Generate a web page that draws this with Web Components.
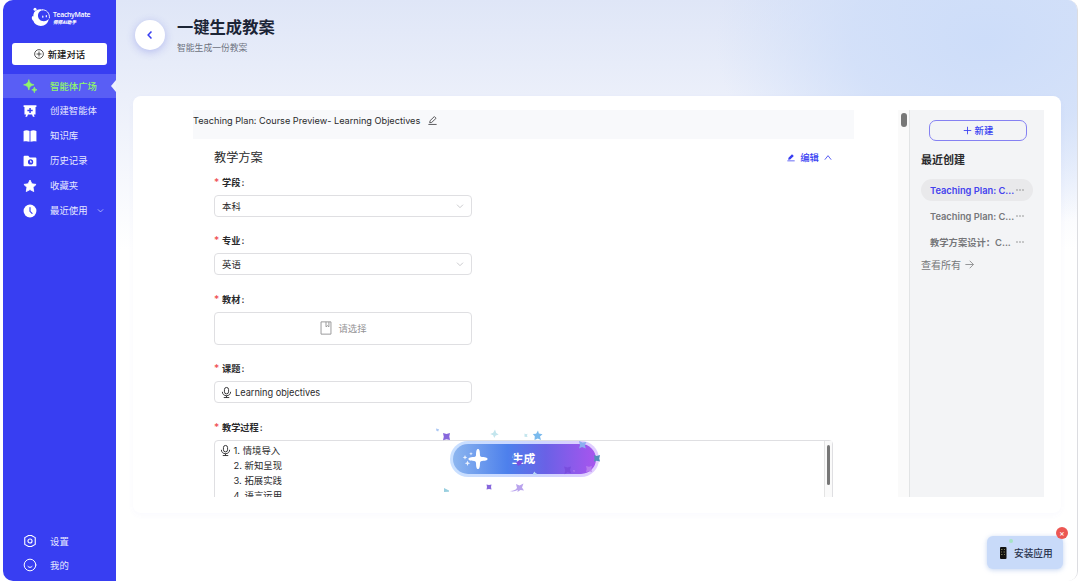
<!DOCTYPE html>
<html lang="zh-CN">
<head>
<meta charset="utf-8">
<title>TeachyMate</title>
<style>
html, body {
  margin: 0;
  height: 100%;
  overflow: hidden;
  background: #fff;
}

body {
  font-family: Inter, "Noto Sans CJK SC", sans-serif;
  font-size: 9.4px;
  color: #2a2a2c;
}
</style>
</head>
<body>
<tm-app></tm-app>

<script>
const ICONS = {
  plusCircle: '<g fill="none" stroke="currentColor" stroke-width="1.7"><circle cx="12" cy="12" r="10.500"/><path d="M12 6v12M6 12h12"/></g>',
  sparkle: '<path fill="currentColor" d="M10 1c1.200 5.800 2.700 7.500 9 9-6.300 1.500-7.800 3.200-9 9-1.200-5.800-2.700-7.500-9-9C7.300 8.500 8.800 6.800 10 1zM19.500 13.500c.7 3.200 1.600 4.100 4.500 5-2.900.9-3.800 1.800-4.500 5-.7-3.200-1.600-4.100-4.500-5 2.900-.9 3.800-1.800 4.500-5z" stroke="currentColor" stroke-width="1.200"/>',
  board: '<path fill="currentColor" fill-rule="evenodd" d="M1 2h22v3h-1.500v13h-3l1.500 4h-3l-1.500-4h-7L7 22H4l1.500-4h-3V5H1zM10.800 7v3H7.500v2.600h3.300v3h2.600v-3h3.200V10h-3.200V7z"/>',
  book: '<path fill="currentColor" d="M1 3.500C4.500 1.800 8 2 11.200 3.500V22C8 20.500 4.500 20.500 1 21.500zM12.800 3.500C16 2 19.500 1.800 23 3.500v18c-3.500-1-7-1-10.200.5z"/>',
  folder: '<path fill="currentColor" fill-rule="evenodd" d="M1 4.500C1 3.500 1.700 3 2.500 3H9l2.500 3h10c1 0 1.500.6 1.500 1.500v12c0 1-.6 1.500-1.500 1.500h-19C1.600 21 1 20.400 1 19.500zM13 9a4.500 4.500 0 1 0 0 9 4.500 4.500 0 0 0 0-9zm-.8 2.300h1.600V13h1.700v1.600h-3.300z"/>',
  star: '<path fill="currentColor" stroke="currentColor" stroke-width="1.500" stroke-linejoin="round" d="M12 1.800l3.200 6.500 7.200 1-5.200 5 1.200 7.200-6.400-3.400-6.400 3.400 1.200-7.200-5.200-5 7.200-1z"/>',
  clock: '<circle cx="12" cy="12" r="11" fill="currentColor"/><path d="M12 6v6.500l3.500 3.500" fill="none" stroke="#383ef2" stroke-width="2" stroke-linecap="round"/>',
  gear: '<g fill="none" stroke="currentColor" stroke-width="1.900" stroke-linejoin="round"><path d="M9.500 2.500h5L21 6.200v11.600l-6.500 3.700h-5L3 17.800V6.200z"/><circle cx="12" cy="12" r="3.500"/></g>',
  smile: '<g fill="none" stroke="currentColor" stroke-width="1.700" stroke-linecap="round"><circle cx="12" cy="12" r="10"/><path d="M8.500 14.500c2 2.200 5 2.200 7 0"/></g>',
  down: '<path d="M3 8l9 9 9-9" fill="none" stroke="currentColor" stroke-width="2.200"/>',
  up: '<path d="M2.500 18.500L12 6.500l9.500 12" fill="none" stroke="currentColor" stroke-width="2.500"/>',
  left: '<path d="M15.500 3.500L7.500 12l8 8.500" fill="none" stroke="currentColor" stroke-width="3.600"/>',
  right: '<path d="M1 12h21M12.500 2l10 10-10 10" fill="none" stroke="currentColor" stroke-width="2"/>',
  pen: '<g fill="none" stroke="currentColor" stroke-width="2"><path d="M4.500 18l1-5.500L17 1.500l4.500 4.500L10 17zM1 22.500h22"/></g>',
  penSolid: '<path fill="currentColor" d="M3.500 18.500l1-6L15 2l5.500 5.500L9.500 18zM1 20.800h22V23H1z"/>',
  plus: '<path d="M12 2v20M2 12h20" fill="none" stroke="currentColor" stroke-width="2.300"/>',
  mic: '<g fill="none" stroke="currentColor" stroke-width="2"><rect x="7.500" y="1" width="9" height="14" rx="4.500"/><path d="M3 10.500c0 5 3.500 8.500 9 8.500s9-3.500 9-8.500M12 19v4M6 23h12"/></g>',
  bookmark: '<g fill="none" stroke="currentColor" stroke-width="1.600"><path d="M3.500 1.500h17v21h-17zM12 1.500V10l2.500-2 2.500 2V1.500"/></g>',
  dots: '<g fill="currentColor"><circle cx="3" cy="12" r="2"/><circle cx="12" cy="12" r="2"/><circle cx="21" cy="12" r="2"/></g>'
};

class TmIcon extends HTMLElement {
  constructor() {
    super();
    this.attachShadow({mode: 'open'});
  }

  connectedCallback() {
    this.shadowRoot.innerHTML = `
<style>
:host { display: block; flex: none; width: 14px; height: 14px; }
svg { display: block; width: 100%; height: 100%; }
</style>
<svg viewBox="0 0 24 24">${ICONS[this.getAttribute('name')]}</svg>
`;
  }
}

class TmLogo extends HTMLElement {
  constructor() {
    super();
    this.attachShadow({mode: 'open'}).innerHTML = `
<style>
:host { display: flex; gap: 2px; height: 20px; color: #fff; }
svg { width: 20px; height: 20px; }
.words { display: flex; flex-direction: column; padding-top: 4px; }
b { font: 600 6.900px/8px "Open Sans", sans-serif; letter-spacing: -.32px; }
i { font: italic 900 4.600px/6px "Noto Sans CJK SC", sans-serif; }
</style>
<svg viewBox="0 0 20 20">
  <circle cx="4" cy="2.300" r="1.500" fill="#fff"/>
  <path fill="#fff" d="M3.200 5.200C5.500 2.300 9.200 1.600 12.500 3c-3 .2-5.200 2-5.500 4.800-.4 3.600 2.200 6.500 5.800 6.500 2.300 0 4-.9 5-2.500-.6 4.200-3.800 7.200-8 7.200-3.600 0-6.500-2-7.500-5.200C.9 12.700.5 10.700 1 9.700c.3-.6.9-.5 1.300-.1 0-1.600.2-3 .9-4.400z"/>
  <path fill="none" stroke="#fff" stroke-width=".9" d="M11 2.800c4.500-.2 7.900 3.300 7.400 8.500"/>
  <path stroke="#fff" stroke-width="1.200" stroke-linecap="round" d="M11.800 9v1.200M15.300 8.500v1.200"/>
</svg>
<div class="words"><b>TeachyMate</b><i>师师AI助手</i></div>
`;
  }
}

class TmNavItem extends HTMLElement {
  constructor() {
    super();
    this.attachShadow({mode: 'open'});
  }

  connectedCallback() {
    this.shadowRoot.innerHTML = `
<style>
:host {
  display: flex;
  align-items: center;
  box-sizing: border-box;
  height: 25px;
  padding-left: 20px;
  color: #e6e8ff;
}
:host([active]) {
  position: relative;
  height: 24px;
  background: #595ef5;
  color: #8ff66c;
  font-weight: 500;
}
:host([active])::after {
  content: "";
  position: absolute;
  right: 0;
  top: 6px;
  border: solid transparent;
  border-width: 6px 5.500px 6px 0;
  border-right-color: #eef1fc;
}
.label { margin: -1px 0 0 13px; white-space: nowrap; }
.icon { color: #fff; }
:host([active]) .icon { color: inherit; }
.arrow { width: 7px; height: 7px; margin: -1px 0 0 9px; }
</style>
<tm-icon class="icon" name="${this.getAttribute('icon')}"></tm-icon>
<span class="label"><slot></slot></span>
${this.hasAttribute('expandable') ? '<tm-icon class="arrow" name="down"></tm-icon>' : ''}
`;
  }
}

class TmSidebar extends HTMLElement {
  constructor() {
    super();
    this.attachShadow({mode: 'open'}).innerHTML = `
<style>
:host {
  display: flex;
  flex-direction: column;
  box-sizing: border-box;
  width: 113px;
  background: #383ef2;
}
tm-logo { margin: 7px 0 16px 28px; }
button {
  display: flex;
  align-items: center;
  justify-content: center;
  gap: 4px;
  box-sizing: border-box;
  height: 22px;
  margin: 0 9px 9px;
  padding: 0 0 1px;
  border: 0;
  border-radius: 3px;
  background: #fff;
  color: #111;
  font: inherit;
  font-weight: 500;
}
button tm-icon { width: 10px; height: 10px; }
.bottom { margin-top: auto; padding-bottom: 4px; }
.bottom tm-nav-item { height: 24px; }
</style>
<tm-logo></tm-logo>
<button><tm-icon name="plusCircle"></tm-icon>新建对话</button>
<nav>
  <tm-nav-item icon="sparkle" active>智能体广场</tm-nav-item>
  <tm-nav-item icon="board">创建智能体</tm-nav-item>
  <tm-nav-item icon="book">知识库</tm-nav-item>
  <tm-nav-item icon="folder">历史记录</tm-nav-item>
  <tm-nav-item icon="star">收藏夹</tm-nav-item>
  <tm-nav-item icon="clock" expandable>最近使用</tm-nav-item>
</nav>
<div class="bottom">
  <tm-nav-item icon="gear">设置</tm-nav-item>
  <tm-nav-item icon="smile">我的</tm-nav-item>
</div>
`;
  }
}

class TmPageHeader extends HTMLElement {
  constructor() {
    super();
    this.attachShadow({mode: 'open'}).innerHTML = `
<style>
:host { display: flex; align-items: flex-start; gap: 12px; height: 96px; padding-left: 19px; box-sizing: border-box; }
.back {
  display: grid;
  place-items: center;
  width: 30px;
  height: 30px;
  margin-top: 20px;
  border-radius: 50%;
  background: #fff;
  color: #383ef2;
  box-shadow: 0 2px 8px rgba(70, 80, 220, .3);
}
.back tm-icon { width: 10px; height: 10px; }
h1 { margin: 16px 0 0; font-size: 16.300px; line-height: 22px; font-weight: 600; color: #1c2536; }
p { margin: 3px 0 0; font-size: 8.800px; line-height: 13px; color: #6d7280; }
</style>
<div class="back"><tm-icon name="left"></tm-icon></div>
<div>
  <h1><slot></slot></h1>
  <p><slot name="subtitle"></slot></p>
</div>
`;
  }
}

class TmField extends HTMLElement {
  constructor() {
    super();
    this.attachShadow({mode: 'open'});
  }

  connectedCallback() {
    this.shadowRoot.innerHTML = `
<style>
:host { display: block; width: 258px; margin-bottom: 16.400px; }
label { display: block; height: 16px; margin-bottom: 4px; line-height: 16px; font-size: 9.200px; font-weight: 600; white-space: nowrap; }
label::before { content: "*"; display: inline-block; width: 8px; color: #ef4c50; font-size: 10px; line-height: 12px; font-weight: 500; }
label span { margin-left: 1px; }
.box {
  display: flex;
  align-items: center;
  box-sizing: border-box;
  height: 22px;
  padding: 0 7px;
  border: 1px solid #dfdfe2;
  border-radius: 4px;
  background: #fff;
}
:host([type="picker"]) .box { height: 33px; justify-content: center; gap: 5px; padding-bottom: 1px; color: #949496; }
:host([type="area"]) { width: 619px; margin: 0; }
:host([type="area"]) .box { height: 90px; align-items: flex-start; padding: 2px 0 0 6px; line-height: 15px; }
:host([type="text"]) .box { font-size: 9.200px; }
.arrow { width: 8px; height: 8px; margin-left: auto; color: #b8b8bc; }
.mic { width: 11px; height: 13px; margin: 0 3px 0 -1px; }
:host([type="area"]) .mic { margin: 1px 2.500px 0 -1px; }
.track { align-self: stretch; box-sizing: border-box; width: 8px; margin: -2px 0 0 auto; padding: 4px 0 0 2px; border-left: 1px solid #e4e4e4; background: #fafafa; }
.track::before { content: ""; display: block; width: 3px; height: 40px; border-radius: 2px; background: #777; }
</style>
<label>${this.getAttribute('label')}<span>:</span></label>
<div class="box">${this.inner()}</div>
`;
  }

  inner() {
    switch (this.getAttribute('type')) {
      case 'select':
        return '<slot></slot><tm-icon class="arrow" name="down"></tm-icon>';
      case 'picker':
        return '<tm-icon name="bookmark"></tm-icon><slot></slot>';
      case 'area':
        return '<tm-icon class="mic" name="mic"></tm-icon><slot></slot><div class="track"></div>';
      default:
        return '<tm-icon class="mic" name="mic"></tm-icon><slot></slot>';
    }
  }
}

class TmPlanForm extends HTMLElement {
  constructor() {
    super();
    this.attachShadow({mode: 'open'}).innerHTML = `
<style>
:host { display: block; width: 661px; height: 387px; overflow: hidden; }
header { display: flex; align-items: center; gap: 8px; height: 29px; padding-bottom: 8px; box-sizing: border-box; background: #f8f9fb; font-size: 9.170px; }
header tm-icon { width: 9px; height: 9px; }
.body { padding: 0 21px; }
.title { display: flex; align-items: center; height: 36px; }
h2 { margin: 0 auto 0 0; font-size: 12.200px; font-weight: 400; }
.edit { display: flex; align-items: center; gap: 5px; margin-right: 1px; color: #383ef2; font-weight: 500; }
.edit tm-icon { width: 8px; height: 9px; }
ol { margin: 0; padding: 0; list-style: none; }
</style>
<header>Teaching Plan: Course Preview- Learning Objectives <tm-icon name="pen"></tm-icon></header>
<div class="body">
  <div class="title">
    <h2>教学方案</h2>
    <div class="edit"><tm-icon name="penSolid"></tm-icon>编辑<tm-icon name="up"></tm-icon></div>
  </div>
  <tm-field type="select" label="学段">本科</tm-field>
  <tm-field type="select" label="专业">英语</tm-field>
  <tm-field type="picker" label="教材">请选择</tm-field>
  <tm-field type="text" label="课题">Learning objectives</tm-field>
  <tm-field type="area" label="教学过程">
    <ol>
      <li>1. 情境导入</li>
      <li>2. 新知呈现</li>
      <li>3. 拓展实践</li>
      <li>4. 语言运用</li>
    </ol>
  </tm-field>
</div>
`;
  }
}

class TmGenerateButton extends HTMLElement {
  constructor() {
    super();
    this.attachShadow({mode: 'open'}).innerHTML = `
<style>
:host { display: block; width: 149px; height: 36px; }
button {
  position: relative;
  box-sizing: border-box;
  width: 100%;
  height: 100%;
  padding: 0;
  border: 0;
  border-radius: 18px;
  background: linear-gradient(90deg, #c9e0ff, #ccd6ff 55%, #e2cdff);
  font: 700 11.800px/37px Inter, "Noto Sans CJK SC", sans-serif;
  color: #fff;
}
button::before {
  content: "";
  position: absolute;
  inset: 3px;
  border-radius: 15px;
  background: linear-gradient(90deg, #8db6ef, #4d80ec 38%, #6a61e6 65%, #a855ee);
}
span { position: relative; left: -1px; }
svg { position: absolute; left: -15px; top: -14px; width: 170px; height: 66px; overflow: visible; }
</style>
<button>
  <span><slot></slot></span>
  <svg viewBox="435 427 170 66">
    <g fill="#fff">
      <path d="M478 449c1.200 0 1.900 1.200 2 6.300.2 1 .8 1.600 1.800 1.800 5 .2 5.700.9 5.700 1.900s-.7 1.700-5.700 1.900c-1 .2-1.600.8-1.800 1.800-.1 5.100-.8 6.300-2 6.300s-1.900-1.200-2-6.300c-.2-1-.8-1.600-1.800-1.800-5-.2-5.700-.9-5.700-1.900s.7-1.700 5.700-1.900c1-.2 1.600-.8 1.800-1.800.1-5.100.8-6.300 2-6.300z"/>
      <path opacity=".85" d="M465 455l.7 1.700 1.700.7-1.700.7-.7 1.700-.7-1.700-1.700-.7 1.700-.7zM471 452l.5 1.300 1.300.5-1.300.5-.5 1.300-.5-1.300-1.300-.5 1.300-.5zM467.500 460.500l.8 2 2 .8-2 .8-.8 2-.8-2-2-.8 2-.8z"/>
    </g>
    <path fill="#8767dc" d="M443 433l3.500 1 3.500-1-.7 3.500.7 3.500-3.500-.8-3.500 1 .8-3.500zM486.500 484.500l2.500.6 2.500-.6-.5 2.500.5 2.500-2.500-.5-2.500.5.500-2.500z"/>
    <path fill="#b9a3ed" d="M516 484l3.500 1.500 4-2-1.500 4 2 3-3.500-.5-3 2 .2-2.200c-2.500 1.700-5 2-8.200 1.200 3 .2 5.500-.5 7.500-3z"/>
    <path fill="#acc8f4" d="M436 428.500l3 .8-.8 2.200-1.800-.8z"/>
    <path fill="#c3e5ed" d="M495 429.500l1.200 3.500 2.500 1.500-3 1-1.500 2.500-1-2.700-3-1.300 3-1.200zM524.500 433.500l1.500.7 1.500-.5-.5 1.800.5 1.500-3-.3z"/>
    <path fill="#7abaed" d="M538 430.500l.8 3 3.700.7-2.500 2.300 1 3.500-3.200-1.400-3.300 1.300.3-3.600-2-2.300 3.300-.3z"/>
    <path fill="#99cfdf" d="M444 488l5 2.500v1.200l-5 .3z"/>
    <path fill="#8caef0" d="M579 441l3.500 1.500 4-.5-1.700 3 1 3.500-3.800-1.500-3 1.500 1-3.300z"/>
    <path fill="#548eba" d="M594 455l2.500 1 3.500-1-.7 3.500.7 3-3.500-.7-2.500 1 .5-3z"/>
    <path fill="#794ddd" d="M564 466.500l3.500 1 3.500-1-1 3.300 1 3.500-3.500-1-3 2 .7-4zM516 462l3.500-1.500 3 1-1.500 3-3 1.500z"/>
    <path fill="#bb84ee" opacity=".8" d="M586 466l3 .7 3-.7-.7 3 .7 3-3-.7-3 .7.700-3zM573 470l2 .5-1 2z"/>
    <path fill="#b9d7f8" d="M534.500 471.500l1 1.500 1.500.8-1.500 1.200h-2l-.5-1.500z"/>
    <path fill="#5a8ee8" d="M512.500 454.500l2.200 1-.5 2.500-1.900.4z"/>
  </svg>
</button>
`;
  }
}

class TmHistoryItem extends HTMLElement {
  constructor() {
    super();
    this.attachShadow({mode: 'open'}).innerHTML = `
<style>
:host {
  display: flex;
  align-items: center;
  justify-content: space-between;
  box-sizing: border-box;
  height: 22px;
  margin-bottom: 4px;
  padding: 0 9px;
  border-radius: 11px;
  color: #76777a;
  font-size: 9.300px;
  font-weight: 600;
  white-space: nowrap;
}
:host([active]) { background: #e9e9eb; color: #4442ee; }
tm-icon { width: 8px; height: 8px; color: #777; }
</style>
<span><slot></slot></span><tm-icon name="dots"></tm-icon>
`;
  }
}

class TmHistory extends HTMLElement {
  constructor() {
    super();
    this.attachShadow({mode: 'open'}).innerHTML = `
<style>
:host { display: block; box-sizing: border-box; width: 135px; height: 387px; padding: 10px 11px 0; border-left: 1px solid #e2e4e5; background: #f3f4f6; }
button {
  display: flex;
  align-items: center;
  justify-content: center;
  gap: 3px;
  box-sizing: border-box;
  width: 98px;
  height: 21px;
  margin: 0 0 0 8px;
  padding: 0 0 1px;
  border: 1px solid #8581f2;
  border-radius: 7px;
  background: transparent;
  color: #383ef2;
  font: inherit;
  font-weight: 500;
}
button tm-icon { width: 9px; height: 9px; }
h3 { margin: 11px 0; font-size: 11px; line-height: 16px; font-weight: 600; }
.all { display: flex; align-items: center; gap: 3px; height: 20px; margin-top: -3px; font-size: 10px; color: #77787a; }
.all tm-icon { width: 9px; height: 9px; margin-left: 1px; }
</style>
<button><tm-icon name="plus"></tm-icon>新建</button>
<h3>最近创建</h3>
<tm-history-item active>Teaching Plan: C...</tm-history-item>
<tm-history-item>Teaching Plan: C...</tm-history-item>
<tm-history-item>教学方案设计：C...</tm-history-item>
<div class="all">查看所有<tm-icon name="right"></tm-icon></div>
`;
  }
}

class TmInstallButton extends HTMLElement {
  constructor() {
    super();
    this.attachShadow({mode: 'open'}).innerHTML = `
<style>
:host {
  display: flex;
  align-items: center;
  gap: 7px;
  box-sizing: border-box;
  width: 76px;
  height: 33px;
  padding-left: 12px;
  border-radius: 6px;
  background: #c8daf9;
  box-shadow: 0 1px 5px rgba(110, 150, 220, .4);
  color: #29344e;
  font-size: 9.700px;
  font-weight: 500;
  white-space: nowrap;
}
svg { width: 8px; height: 12px; }
.close {
  position: absolute;
  right: -5px;
  top: -9px;
  width: 12px;
  height: 12px;
  border-radius: 50%;
  background: #ec5753;
  color: #fff;
  font-size: 8px;
  line-height: 12px;
  text-align: center;
}
.dot { position: absolute; left: 22px; top: 3px; width: 4px; height: 4px; border-radius: 50%; background: #a5e2c4; }
</style>
<svg viewBox="0 0 8 12"><rect x="1" width="6.500" height="12" rx="1" fill="#111"/><path fill="#775" d="M2 2h1.500v1H2zM5 2h1v1H5zM2 4.500h1v1H2zM4.500 4.500H6v1H4.500zM2 7h1.500v1H2zM5 7h1v1H5z"/></svg>
<slot></slot>
<span class="dot"></span>
<span class="close">×</span>
`;
  }
}

class TmApp extends HTMLElement {
  constructor() {
    super();
    this.attachShadow({mode: 'open'}).innerHTML = `
<style>
:host {
  display: flex;
  position: relative;
  box-sizing: border-box;
  height: 581px;
  margin: 0 2px 0 3px;
  border-right: 1px solid #dcdde1;
  border-radius: 10px;
  overflow: hidden;
}
main {
  flex: 1;
  background:
    radial-gradient(ellipse 270px 190px at 870px 40px, #cdddf9 0, rgba(207, 222, 249, .8) 50%, rgba(220, 230, 250, 0) 100%),
    linear-gradient(#dfe6f7 0, #ebeffa 95px, #fff 250px);
}
.card {
  display: flex;
  position: relative;
  box-sizing: border-box;
  width: 928px;
  height: 417px;
  margin-left: 17px;
  padding: 14px 0 0 60px;
  border-radius: 8px;
  background: #fff;
  box-shadow: 0 2px 6px rgba(100, 110, 220, .04);
}
.track { box-sizing: border-box; width: 11px; height: 387px; margin-left: 44px; padding: 3px 0 0 3px; background: #fafafa; }
.track::before { content: ""; display: block; width: 6px; height: 14px; border-radius: 3px; background: #777; }
tm-generate-button { position: absolute; left: 317px; top: 345px; }
tm-install-button { position: absolute; right: 14px; bottom: 12px; }
</style>
<tm-sidebar></tm-sidebar>
<main>
  <tm-page-header>一键生成教案<span slot="subtitle">智能生成一份教案</span></tm-page-header>
  <div class="card">
    <tm-plan-form></tm-plan-form>
    <div class="track"></div>
    <tm-history></tm-history>
    <tm-generate-button>生成</tm-generate-button>
  </div>
</main>
<tm-install-button>安装应用</tm-install-button>
`;
  }
}

customElements.define('tm-icon', TmIcon);
customElements.define('tm-logo', TmLogo);
customElements.define('tm-nav-item', TmNavItem);
customElements.define('tm-sidebar', TmSidebar);
customElements.define('tm-page-header', TmPageHeader);
customElements.define('tm-field', TmField);
customElements.define('tm-plan-form', TmPlanForm);
customElements.define('tm-generate-button', TmGenerateButton);
customElements.define('tm-history-item', TmHistoryItem);
customElements.define('tm-history', TmHistory);
customElements.define('tm-install-button', TmInstallButton);
customElements.define('tm-app', TmApp);
</script>
</body>
</html>
